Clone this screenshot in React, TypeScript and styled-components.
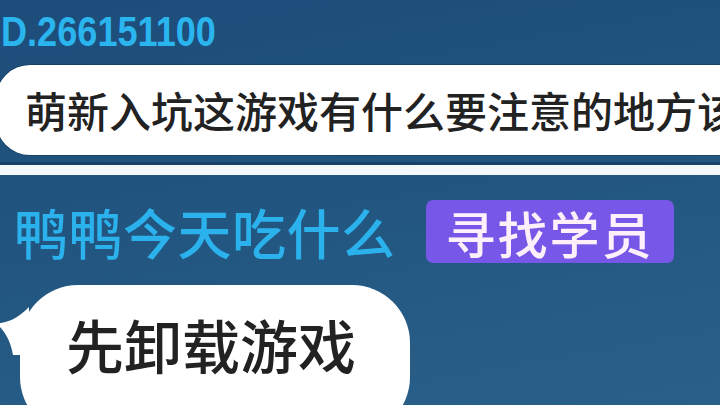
import React from 'react';
import styled, { createGlobalStyle } from 'styled-components';

const GlobalStyle = createGlobalStyle`
  html, body {
    margin: 0;
    padding: 0;
    background: #1f4f7c;
  }
  * {
    box-sizing: border-box;
  }
`;

const Screen = styled.div`
  width: 720px;
  height: 405px;
  overflow: hidden;
  display: flex;
  flex-direction: column;
  background: linear-gradient(170deg, #1d4c7a 0%, #21557f 45%, #29608a 100%);
  font-family: 'Noto Sans CJK SC', 'Noto Sans', sans-serif;

  & > * {
    flex-shrink: 0;
  }
`;

const IdLine = styled.div`
  height: 55px;
  padding: 10px 0 0 1px;
`;

/* the user id is set in a condensed bold face */
const IdText = styled.span`
  display: inline-block;
  transform: scaleX(0.84);
  transform-origin: left center;
  font-family: 'Liberation Sans', Arial, sans-serif;
  font-weight: 700;
  font-size: 43px;
  line-height: 42px;
  color: #2bb5ef;
`;

const Bubble = styled.div<{ $big?: boolean }>`
  position: relative;
  display: flex;
  align-items: ${(p) => (p.$big ? 'flex-start' : 'center')};
  background: #ffffff;
  color: #222222;
  white-space: nowrap;
  font-weight: 500;
  line-height: 1;
`;

const QuestionBubble = styled(Bubble)`
  margin: 10px 0 0 -4px;
  width: 780px;
  height: 90px;
  padding-left: 29px;
  border-radius: 34px;
  font-size: 42px;
  box-shadow: 0 0 0 1px rgba(10, 40, 70, 0.35);
`;

const Divider = styled.div`
  margin-top: 10px;
  height: 10px;
  background: #f4f8fb;
  box-shadow: 0 -3px 0 rgba(10, 40, 70, 0.4);
`;

const NameRow = styled.div`
  margin-top: 25px;
  display: flex;
  align-items: center;
  padding-left: 14px;
  gap: 30px;
`;

const Name = styled.span`
  font-size: 54px;
  line-height: 1;
  font-weight: 500;
  color: #2bb2ec;
  letter-spacing: 0.5px;
`;

const Tag = styled.span`
  height: 63px;
  padding: 0 20px;
  display: flex;
  align-items: center;
  border-radius: 7px;
  background: #7757e8;
  color: #fdf0fb;
  font-size: 50px;
  font-weight: 500;
  line-height: 1;
  letter-spacing: 2px;
`;

const AnswerBubble = styled(Bubble)`
  margin: 22px 0 0 20px;
  width: 390px;
  height: 150px;
  padding: 30px 0 0 46px;
  border-radius: 58px;
  font-size: 58px;
`;

const Tail = styled.svg`
  position: absolute;
  left: -21px;
  top: 22px;
  width: 30px;
  height: 48px;
`;

export default function App() {
  return (
    <>
      <GlobalStyle />
      <Screen>
        <IdLine>
          <IdText>D.266151100</IdText>
        </IdLine>
        <QuestionBubble>萌新入坑这游戏有什么要注意的地方该</QuestionBubble>
        <Divider />
        <NameRow>
          <Name>鸭鸭今天吃什么</Name>
          <Tag>寻找学员</Tag>
        </NameRow>
        <AnswerBubble $big>
          <Tail viewBox="0 0 30 48">
            <path d="M30 0 C22 8 14 14 2 16 C0 16 0 18 1 20 C8 28 12 36 14 48 L30 48 Z" fill="#ffffff" />
          </Tail>
          先卸载游戏
        </AnswerBubble>
      </Screen>
    </>
  );
}
